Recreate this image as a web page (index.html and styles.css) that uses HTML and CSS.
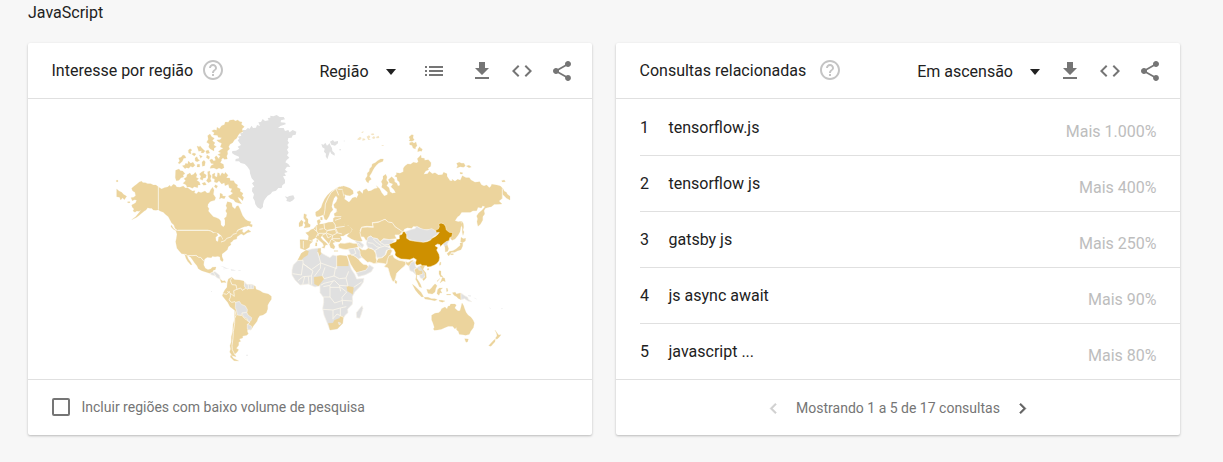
FILE: index.html
```html
<!DOCTYPE html>
<html lang="pt-BR">
<head>
<meta charset="utf-8">
<title>JavaScript</title>
<link rel="stylesheet" href="styles.css">
</head>
<body>
<svg class="sprite" aria-hidden="true">
  <symbol id="help" viewBox="0 0 24 24"><path d="M11 18h2v-2h-2v2zm1-16C6.48 2 2 6.48 2 12s4.480 10 10 10 10-4.480 10-10S17.520 2 12 2zm0 18c-4.410 0-8-3.590-8-8s3.590-8 8-8 8 3.590 8 8-3.590 8-8 8zm0-14c-2.210 0-4 1.790-4 4h2c0-1.100.9-2 2-2s2 .9 2 2c0 2-3 1.750-3 5h2c0-2.250 3-2.500 3-5 0-2.210-1.790-4-4-4z"/></symbol>
  <symbol id="list" viewBox="0 0 24 24"><path d="M3 13h2v-2H3v2zm0 4h2v-2H3v2zm0-8h2V7H3v2zm4 4h14v-2H7v2zm0 4h14v-2H7v2zM7 7v2h14V7H7z"/></symbol>
  <symbol id="download" viewBox="0 0 24 24"><path d="M19 9h-4V3H9v6H5l7 7 7-7zM5 18v2h14v-2H5z"/></symbol>
  <symbol id="code" viewBox="0 0 24 24"><path d="M9.400 16.600L4.800 12l4.600-4.600L8 6l-6 6 6 6 1.400-1.400zm5.200 0l4.600-4.600-4.600-4.600L16 6l6 6-6 6-1.400-1.400z"/></symbol>
  <symbol id="share" viewBox="0 0 24 24"><path d="M18 16.080c-.76 0-1.440.3-1.960.77L8.910 12.700c.05-.23.09-.46.09-.7s-.04-.47-.09-.7l7.050-4.110c.54.5 1.250.81 2.040.81 1.660 0 3-1.340 3-3s-1.340-3-3-3-3 1.340-3 3c0 .24.04.47.09.7L8.040 9.810C7.500 9.310 6.790 9 6 9c-1.660 0-3 1.340-3 3s1.340 3 3 3c.79 0 1.500-.31 2.040-.81l7.120 4.160c-.05.21-.08.43-.08.65 0 1.610 1.310 2.920 2.920 2.920s2.920-1.310 2.920-2.920-1.310-2.920-2.920-2.920z"/></symbol>
  <symbol id="left" viewBox="0 0 24 24"><path d="M15.410 7.410L14 6l-6 6 6 6 1.410-1.410L10.830 12z"/></symbol>
  <symbol id="right" viewBox="0 0 24 24"><path d="M10 6L8.590 7.410 13.170 12l-4.580 4.590L10 18l6-6z"/></symbol>
</svg>

<h1 class="term">JavaScript</h1>
<main class="cards">
  <section class="card">
    <header class="card-header">
      <h2 class="title">Interesse por região</h2>
      <svg class="icon help help-region"><use href="#help"/></svg>
      <div class="controls">
        <span class="select">Região<i class="arrow"></i></span>
        <svg class="icon list"><use href="#list"/></svg>
        <svg class="icon download"><use href="#download"/></svg>
        <svg class="icon"><use href="#code"/></svg>
        <svg class="icon"><use href="#share"/></svg>
      </div>
    </header>
    <svg class="map" viewBox="28 99 564 280">
      <!-- Alaska, Canada and the Arctic archipelago -->
      <g class="land" transform="translate(105 105) scale(.33333)">
        <path d="M80 250L88 243 95 238 103 231 110 229 114 233 121 233 128 236 137 236 145 240 153 240 160 246V314L153 316 145 315 140 310 135 310 128 308 123 315 118 318 108 326 100 333 95 337 80 344 92 335 98 328 103 322 108 315 102 319 95 318 90 322 84 318 87 312 82 307 80 300 86 297 92 293 95 285 88 284 82 287 78 278 86 277 92 272 90 262 83 258zM35 252L42 258 50 262 55 268 65 274 58 284 53 278 47 285 44 277 35 275zM34 226h5v4h-5zM68 290h7v3h-7z"/>
        <path d="M160 246L170 252 178 248 188 246 194 241 198 245 205 238 211 240 215 246 225 247 235 243 241 249 248 248 256 254 262 258 270 257 268 264 275 266 280 260 288 263 300 258 306 264 313 263 317 254 323 247 327 255 325 268 332 278 329 286 320 288 315 290 309 298 308 305 312 311 310 318 318 328 325 335 334 338 342 342 347 348 348 360 355 366 360 360 360 346 358 340 364 335 366 325 362 318 366 309 363 302 367 290 375 292 380 294 382 305 390 312 395 303 400 302 405 312 408 320 413 332 421 343 430 349 432 358 424 363 410 368 398 374 392 385 402 375 413 373 412 380 417 384 430 374 438 380 427 383 416 391 410 387 400 389 392 395 380 397 372 404 362 406 353 412 345 408 354 402 349 392 340 385 322 380 308 376H218L210 370 207 360 200 354 194 343 190 335 181 328 175 322 165 318 160 314z"/>
        <path class="edge" d="M160 246V314M218 376H308L322 380"/>
        <path d="M429 348L438 350 435 357 442 359 441 366 430 362 421 365 427 358zM199 360L205 370 215 378 205 373 198 365z"/>
        <path d="M350 62L358 59 361 51 370 52 374 46 385 44 392 48 398 45 405 50 411 51 409 58 418 65 411 72 414 80 405 84 400 90 395 100 388 105 383 113 375 118 371 125 374 132 367 138 368 147 365 153 367 162 358 163 354 158 346 167 342 159 346 153 338 149 348 144 340 140 347 134 355 130 346 126 350 115 341 111 335 105 345 104 350 98 340 97 337 91 325 90 328 83 320 78 327 74 335 76 336 67 343 71z"/>
        <path d="M308 92L315 87 320 95 328 100 322 107 330 113 326 120 334 125 327 130 327 138 316 132 311 126 313 117 305 112 310 103z"/>
        <path d="M276 123l7 3 2-4 6 8 9 8-5 6-7-1 2-6-9 2zM250 136l5-5 6 4-4 4 1 8-7-3zM221 159l7-2 6-7 6 2 3 7-7 1-4 9-8 7-5-2 5-6zM232 182l7-1 3-6 6 2 2-9 7 7 7-3 6 9-6 6-8-3-4 6-8-2-4 3zM260 147l7-3 6 3-5 6zM270 159l6-4 3 8 5 3-7 4-6-2zM291 171l6-5 4 5-2 11-7 2zM277 178h7v8h-8zM306 150l8 5-2 8-8-5zM302 138l8-3 4 9-9 2zM283 150l9 4-5 6z"/>
        <path d="M314 165l7-3 5 6 6-2-3-9 5-5 6 8 10 5-4 8 9 5 2 10-7 4-8-3-7 4-8-4-12 1 3-8 9-5-9-2z"/>
        <path d="M212 196L222 192 226 197 233 198 240 206 234 210 236 216 228 218 222 226 214 227 211 218z"/>
        <path d="M234 235L242 227 237 221 245 216 246 209 255 204 259 211 266 208 271 202 276 210 273 217 281 221 275 226 283 231 286 240 279 240 278 248 268 245 262 250 254 246 246 246 243 239z"/>
        <path d="M283 207L291 200 298 198 296 205 304 210 302 218 294 220 293 226 285 222 288 214zM308 200L315 198 314 207 319 213 316 221 319 229 310 233 304 227 309 219zM291 235L300 232 304 239 296 241z"/>
        <path d="M322 208L330 204 329 213 336 217 338 203 343 205 345 214 351 203 358 208 361 202 369 211 364 219 374 219 376 227 386 227 390 235 398 240 396 247 406 252 405 259 414 265 411 272 416 277 413 287 405 279 398 276 402 285 410 296 400 294 391 291 386 284 375 280 370 273 377 270 384 264 377 260 381 251 373 249 370 238 360 242 358 233 350 237 342 227 336 233 328 231 329 222 322 220z"/>
        <path d="M345 265l7 2 1 6 9 1-4 7-9-2-6 3 2-8zM331 239l7 4-4 7-6-5z"/>
      </g>
      <!-- Greenland, Iceland, Svalbard -->
      <g class="nodata" transform="translate(225 105) scale(.33333)">
        <path d="M45 85L53 84 54 75 62 75 69 68 73 72 80 62 84 69 93 68 96 60 105 63 100 52 108 51 113 42 120 48 131 46 128 39 136 38 136 32 145 34 155 30 164 36 176 36 180 43 168 46 167 52 181 53 182 58 166 63 159 69 176 69 180 78 190 75 194 82 203 75 214 80 212 89 203 91 200 98 190 99 188 107 192 113 187 120 191 127 186 134 191 143 186 151 193 158 185 165 181 172 190 177 196 186 186 185 180 194 188 201 178 204 183 212 174 214 180 225 180 235 172 241 170 249 160 249 153 257 142 260 137 267 128 272 122 280 117 287 114 299 114 306 107 313 97 307 91 298 89 287 84 279 87 268 81 259 82 248 88 245 81 235 88 229 80 220 75 205 74 195 66 184 59 177 47 174 42 169 31 169 32 162 42 160 42 155 28 149 21 144 22 138 33 137 43 131 38 125 48 120 38 106 43 101 39 95 49 92z"/>
        <path d="M179 274L187 276 193 273 205 271 209 280 204 286 195 291 184 288 186 282z"/>
        <path d="M289 117L296 119 301 113 306 122 314 115 317 123 321 129 322 138 329 145 329 152 319 146 315 139 311 151 307 163 302 154 303 146 297 140 299 131 292 127zM315 110L324 105 328 110 339 108 339 115 330 122 319 119zM343 133h5v3h-5zM356 107h4v2h-4z"/>
      </g>
      <!-- Russia -->
      <g class="land" transform="translate(345 120) scale(.33333)">
        <path d="M-5 198L5 201 15 205 24 212 25 221 15 227 5 226-2 223 0 230-2 237 12 247 18 240 22 234 31 231 34 235 40 224 36 216 44 212 53 221 55 211 64 206 70 214 78 212 88 206 98 204 94 197 104 206 110 218 118 228 127 224 128 217 118 208 110 202 112 192 109 185 114 176 114 169 122 163 126 171 124 180 130 188 125 197 132 203 135 215 142 220 152 218 147 209 138 200 144 192 134 188 130 179 140 170 148 178 149 186 155 189 159 198 165 196 163 186 157 181 156 172 149 169 155 163 154 158 165 160 175 155 175 145 180 138 188 132 197 133 205 127 215 129 220 125 217 116 228 105 229 114 238 115 239 121 250 119 258 128 257 139 249 145 251 149 242 153 236 163 248 161 253 154 262 161 270 158 280 165 292 164 296 157 306 161 306 169 315 182 322 183 321 178 330 184 338 178 346 181 352 167 363 173 373 173 378 180 390 187 404 185 409 194 417 198 425 195 433 203 438 199 440 193 455 195 466 198 474 206 478 214 484 217 487 223 495 229V240L485 235 472 222 472 235 462 243 471 252 457 253 448 253 439 260 431 262 421 265 417 272 419 282 413 290 413 301 406 313 399 319 396 305 398 296 395 288 401 279 411 271 420 260 413 257 409 264 399 262 395 272 384 272 376 277 350 277 344 286 337 291 330 302 340 305 347 304 349 314 347 325 345 335 339 346 330 357 321 361 314 352 322 342 305 335 297 312 288 309 282 312 285 328 275 331 270 335 260 331 250 328 233 329 220 320 205 319 200 325 187 323 178 327 174 335 165 331 150 321 140 308 130 307 120 298 110 303 100 306 82 308 85 320 65 319 50 322 45 332 50 342 47 352 52 363 40 365 20 357 6 348 16 337 21 329 12 318 0 317-8 305-18 295-16 280-26 275-26 262-18 256-10 248-8 235-5 225-8 210-12 200z"/>
        <path class="edge" d="M-8 200L-8 210-5 225-8 235-10 248-18 256-26 262-26 275-16 280-18 295-8 305 0 317 12 318 21 329 16 337M45 332L50 322 65 319 85 320 82 308 100 306 110 303 120 298 130 307 140 308 150 321 165 331"/>
        <path d="M65 185L61 177 67 168 67 159 73 154 74 146 80 140 82 132 91 128 98 122 107 117 115 117 114 124 101 129 94 136 88 143 84 150 79 160 73 169 79 178 72 182 70 189zM192 51l8-7 5 1-1 9 4 6-8 4-8-2 3-4zM194 68l8-2 5 4 6-4 3 12-4 3-1 6-7-3-3-8-7-2zM218 95l1-8 5-7 3 5 5 2-2 7-5-1zM335 130l8-3 6 3 8 0 4 8-6 4-9-2-11 4 3-7zM364 138l8-2 7 5-7 2zM345 157l8 1-1 4-6 0zM470 182l8-2 3 5-9 1zM350 303l5 8 1 11-2 8 3 6-3 10-2-9 0-14-4-8z"/>
        <path class="faint" d="M38 56l7-6 5 4-5 6-8-1zM48 37l8-3-2 5zM53 55l7 1 1 4-9 2zM65 50l7-4 4 4-4 6 6 3-8 1zM80 54l7-6 4 5-4 4zM93 51l8-4 2 7-8 1zM77 42l8-2 3 4-7 2zM110 76h6v2h-6z"/>
        <path class="edge" d="M472 205V236"/>
      </g>
      <!-- United States, Mexico and South America -->
      <g class="land" transform="translate(160 225) scale(.33333)">
        <path d="M48 17H145L153 18 160 23 170 24 174 31 167 37 168 47 174 50 176 36 183 34 187 42 183 51 195 47 200 40 213 36 219 28 230 25 234 22 240 29 231 35 230 42 221 44 216 50 211 53 213 59 205 65 202 74 194 81 186 87 186 95 190 105 187 110 181 105 180 96 174 94 165 95 157 94 154 98 142 97 134 102 132 109 126 102 122 97 116 97 108 91 96 92 82 91 74 87 65 86 57 77 51 70 49 60 47 50 49 41 51 28z"/>
        <path d="M74 87L82 91 96 92 108 91 116 97 122 97 126 102 132 109 131 120 136 130 144 134 152 132 157 127 168 126 166 134 160 136 157 142 149 145 137 141 125 137 115 131 111 122 104 114 98 105 92 97 86 93 81 92 85 102 91 110 96 119 92 119 83 109 78 100z"/>
        <path class="edge" d="M53 16H145L153 18 160 23M183 51L195 47 200 40 213 36 219 28 230 25M74 87L82 91 96 92 108 91 116 97 122 97 126 102 132 109"/>
        <path d="M205 162L215 157 224 164 238 165 251 168 254 173 263 180 276 179 286 184 288 193 300 197 309 203 325 207 334 214 334 223 327 233 323 241 323 252 319 263 309 270 299 272 294 280 291 289 280 303 276 310 272 315 262 313 262 320 265 326 260 331 248 333 248 339 238 342 242 349 236 352 236 361 229 370 236 374 231 382 224 388 228 395 217 392 209 381 212 372 210 362 214 350 214 335 218 320 219 300 224 281 224 256 210 245 203 232 194 221 187 212 190 203 195 194 201 187 202 173zM213 389L220 400 229 404 236 408 222 407 211 396z"/>
        <path d="M180 162l8 6 7-1 3 6-6-1-8 1z"/>
        <path class="edge" d="M215 159l-4 8 5 12 12 1 3 13-10 4 2 17-12-9-9-6M231 193l11-4 5 7 10-6-4-9 4-10M190 206l10 2 10-9M211 205l0 12-4 8 8 7 10-2 3 5M225 257l3 14-4 10 0 14-4 25-1 20-3 22 1 12 8 16M232 268l14 3 8 10 16 10-8 9"/>
        <path class="nodata" d="M227 232L238 229 244 238 256 243 262 254 261 262 246 264 243 271 232 270 229 255 226 248zM246 264L260 262 264 270 275 278 273 287 265 291 262 281 250 275zM262 297L275 304 273 315 262 312zM253 172L261 179 270 178 282 181 281 191 265 191 261 193 254 184zM151 145L165 140 178 150 181 163 171 158 165 152 153 149z"/>
        <path class="edge" d="M265 179v13M273 179v12M160 142l8 12"/>
        <path class="faint nodata" d="M180 122l12 3 9 5 8 2-12-1-10-6zM212 132l10 2 6 3-14 0zM235 136h7v2h-7zM190 131h4v2h-4zM258 389h6v3h-6zM153 198h3v2h-3z"/>
      </g>
      <!-- Africa, Europe, Middle East and Central Asia -->
      <g class="land" transform="translate(280 200) scale(.33333)">
        <path class="nodata" d="M65 160L80 151 95 147 112 145 122 145 121 157 135 165 150 173 158 165 170 168 200 168 204 182 208 190 214 208 224 223 230 237 252 235 250 246 242 258 225 275 217 290 218 303 217 313 203 327 204 338 196 345 190 355 188 370 172 387 150 390 142 370 132 345 128 325 131 308 131 293 120 278 120 257 105 261 85 252 60 255 45 240 36 225 36 210 40 195 55 180z"/>
        <path class="nodata" d="M246 317L249 325 243 345 239 355 230 353 229 338z"/>
        <path d="M64 160L78 151 86 154 83 165 70 173 64 181 53 181zM114 146L122 145 122 155 124 161 118 167 113 155zM170 168L180 166 200 168 205 183 205 198H170zM102 232L128 228 132 236 124 247 115 258 103 252zM200 258L221 262 218 283 202 273zM145 370L159 369 163 361 178 355 183 348 190 349 188 370 172 386 150 390z"/>
        <path class="edge" d="M53 181h16v10l25 18 28-20-9-33M122 189l48 17v-38M122 189l-1 16-18 24M69 191l-5 34-26-4M69 191l30 22-5 15-25 2-15 12M170 198l-4 8-4 22-30 8-5-10 8-24M162 228l16 8 20-2 8-20M198 234l6 24-26-2-14-14-32 8-10 6M221 262l24-16M160 242l-10 14-20 4M150 257l0 34-20 0M150 262l32 0 18 14-14 16 2 22M150 291l14 18 24-8 28 2M129 328l30 2 0 28M159 330l22-6 18-4M159 356l12-14 20 10M181 324l0 24M85 230l2 22M74 230l-6 24M95 228l0 26M178 256l4 18"/>
        <path class="nodata" d="M175 367l8 3-5 5z"/>
        <!-- Europe -->
        <path d="M57 69L64 60 70 65 67 78 57 80zM72 41L80 44 78 52 84 58 84 69 91 74 90 81 72 84 76 75 72 68 77 63 71 54z"/>
        <path d="M60 119L72 119 84 121 86 108 77 98 86 95 92 89 101 86 108 77 114 74 111 62 118 58 122 65 117 73 132 71 146 67 160 66 160 55 165 51 162 41 171 35 182 36 186 45 183 53 190 60 193 73 210 79 216 90 210 98 198 103 190 108 181 108 185 118 178 126 168 125 158 129 165 140 162 147 152 143 148 132 139 122 126 107 122 112 128 120 139 129 143 135 137 134 133 145 125 142 132 139 128 130 114 118 107 113 97 119 98 125 90 132 88 142 75 150 61 145z"/>
        <path d="M107 45L107 36 116 31 124 22 127 12 134-3 142-14 153-25 166-33 178-40 188-39 192-33 187-28 190-10 191 8 184 20 173 27 164 24 161 14 169 5 173-6 168-13 162-5 158 7 155 20 159 29 151 38 147 49 140 60 134 58 130 44 119 49 110 50z"/>
        <path class="edge" d="M132 46l3-17 1-17 8-18 9-16 15-12 8 20M168-36l8 4 12 0M108 78l2 16-9-7M110 94l4 6-6 12M132 71l2 16 8 5-4 8-22 0M160 66l6 9 0 12-24 4M142 92l24-4 4 12-12 6-18-6M158 106l-2 12 12 8M170 98l16 4M165 61l18-6M162 50h22M166 83l28-4M88 121l10 3M70 123l0 22M126 106l12-6 6 14 10-6M148 132l4-12 6-4 22 0M168 86l5 13M118 88l12-2M116 100l-2 8"/>
        <path d="M107 128h4v10h-5zM110 119h3v6h-3zM121 52h6v8h-5zM162 152h12v2h-12z"/>
        <!-- Middle East -->
        <path class="bordered" d="M174 134L181 129 194 130 209 127 220 130 231 130 235 141 225 145 208 147 198 149 186 147 177 144zM201 165L213 162 225 169 236 178 242 186 250 193 260 194 267 202 258 211 240 216 230 219 221 208 211 192zM236 141L247 149 257 149 265 143 281 149 288 161 288 174 294 189 282 191 270 186 262 187 252 178 243 170 239 160z"/>
        <path class="bordered" d="M288 188L294 175 306 173 317 164 322 150 330 146 337 152 332 162 334 170 322 181 320 193 307 190zM240 98L245 82 262 81 280 82 277 69 295 67 305 62 315 58 325 66 337 68 345 80 368 95 358 105 345 105 350 116 328 119 311 116 300 126 292 116 279 114 273 108 264 112 268 124 257 121 251 111 243 111z"/>
        <path class="nodata" d="M205 148L230 143 240 154 240 166 246 172 236 177 226 169 212 163zM224 122L240 125 252 135 247 144 235 139 232 130zM229 218L257 211 263 203 268 194 281 203 274 215 257 224 235 230zM263 113L273 108 279 114 292 116 300 126 311 118 328 119 344 121 331 134 325 142 335 145 319 151 315 165 304 173 291 173 286 153 274 144 264 143 259 132z"/>
        <path class="edge" d="M264 128l14 2 12 10 10 3M285 151l15-9 14-4 16 4M280 117l12 12 12 8M300 127l14 8 18-2M222 145l6 15-14 6M234 129l10 12"/>
      </g>
      <!-- East and South Asia, Oceania -->
      <g class="land" transform="translate(380 210) scale(.33333)">
        <path class="bordered" d="M12 170L21 160 22 149 27 137 38 134 43 144 57 151 76 154 84 157 96 150 101 151 94 165 87 169 77 163 74 168 62 178 50 190 47 203 43 215 37 213 30 196 24 174z"/>
        <path d="M46 210l5 5-2 6-4-3z"/>
        <path class="nodata" d="M94 157L104 154 106 168 110 174 102 178 108 195 98 185 90 182 87 170zM112 171L119 168 125 173 131 183 135 195 130 207 121 204 118 195 128 192 120 180 113 180z"/>
        <path d="M104 179L112 174 116 181 126 183 127 191 116 195 111 194 110 205 116 214 121 222 125 233 118 230 112 217 107 208 109 196zM124 166L134 169 129 178 138 189 139 203 131 212 128 208 135 201 134 190 126 178 120 169z"/>
        <path class="edge" d="M76 154l2 10M50 145l24 9 8-2"/>
        <path class="nodata" d="M75 65L84 62 95 58 105 56 110 49 118 54 130 58 142 60 155 56 166 62 176 66 171 74 160 80 150 90 130 97 100 93 82 86 80 75z"/>
        <path class="nodata" d="M188 99L198 93 208 90 202 101 202 107 194 110z"/>
        <path d="M195 109L202 106 206 116 203 124 196 126zM243 82L250 86 257 85 256 93 248 98 242 96zM248 99L248 108 243 119 233 122 224 127 214 127 210 133 206 138 201 131 209 124 219 122 228 117 234 112 241 106 240 99zM212 131h8v3h-8z"/>
        <path class="top" d="M28 103L39 98 48 95 50 88 58 87 58 76 66 73 69 65 74 65 80 74 80 85 89 91 100 93 130 97 141 95 151 91 156 85 165 80 172 75 178 67 169 68 167 60 175 57 178 50 176 42 183 39 192 42 197 50 199 60 208 67 218 68 215 81 210 82 207 92 200 94 188 103 181 110 180 104 173 102 165 107 174 113 170 120 177 133 179 143 177 153 170 161 162 166 151 170 142 171 140 167 127 167 122 163 110 166 106 159 109 149 101 144 89 149 79 148 63 147 51 141 45 135 46 127 41 117 32 113z"/>
        <path d="M141 177l5-2 1 4-4 2zM179 158l4-2-1 9-4 1zM177 182l6 1 0 12 6 5-7 1-5-9zM187 202l7 3 2 10-7-3-9 7 4-8zM180 205l-8 10 0-3z"/>
        <path d="M97 223L104 228 114 238 123 247 131 260 125 261 115 251 106 240zM132 262L144 262 155 266 165 266 172 269 164 272 150 269 135 267zM140 238L149 239 155 233 162 224 166 222 171 227 167 236 165 246 157 252 144 250zM173 239L178 234 188 234 181 240 186 249 180 248 177 256 171 251zM177 271h8l10 2-8 4-9-3zM199 235h3l2 8-4 2zM200 253h12v2h-12z"/>
        <path d="M217 248L226 247 229 252 242 249 243 269 234 265 230 260 222 256z"/>
        <path class="nodata" d="M243 249L254 257 263 262 265 268 275 275 264 273 254 266 243 269z"/>
        <path class="faint nodata" d="M264 258l8 2 1-4-9 0zM280 262l8 4 4 2-6-1zM328 291l5 6-3-1zM362 295l7 0-3 3z"/>
        <path d="M155 316L165 310 176 308 182 303 185 296 195 291 201 297 204 289 209 288 212 282 224 282 229 285 224 294 234 303 240 302 243 292 246 279 251 287 254 297 258 307 264 315 273 322 279 330 283 339 280 353 272 364 268 373 257 376 249 374 238 373 235 364 230 360 229 352 225 357 218 349 205 349 194 353 184 358 172 360 163 361 160 357 163 352 159 339 155 330zM254 386L265 387 263 395 258 397zM345 360L352 370 356 375 363 374 358 381 351 388 346 385 351 378 350 371zM346 387L345 395 338 403 333 409 326 407 334 398 341 391z"/>
      </g>
    </svg>
    <footer class="card-footer option">
      <span class="checkbox"></span>
      <span>Incluir regiões com baixo volume de pesquisa</span>
    </footer>
  </section>

  <section class="card">
    <header class="card-header">
      <h2 class="title">Consultas relacionadas</h2>
      <svg class="icon help help-queries"><use href="#help"/></svg>
      <div class="controls">
        <span class="select select-rising">Em ascensão<i class="arrow"></i></span>
        <svg class="icon download"><use href="#download"/></svg>
        <svg class="icon"><use href="#code"/></svg>
        <svg class="icon"><use href="#share"/></svg>
      </div>
    </header>
    <ol class="queries">
      <li class="query"><span class="rank">1</span><span>tensorflow.js</span><span class="value">Mais 1.000%</span></li>
      <li class="query"><span class="rank">2</span><span>tensorflow js</span><span class="value">Mais 400%</span></li>
      <li class="query"><span class="rank">3</span><span>gatsby js</span><span class="value">Mais 250%</span></li>
      <li class="query"><span class="rank">4</span><span>js async await</span><span class="value">Mais 90%</span></li>
      <li class="query"><span class="rank">5</span><span>javascript ...</span><span class="value">Mais 80%</span></li>
    </ol>
    <footer class="card-footer pager">
      <svg class="chevron disabled"><use href="#left"/></svg>
      <span class="range">Mostrando 1 a 5 de 17 consultas</span>
      <svg class="chevron"><use href="#right"/></svg>
    </footer>
  </section>
</main>
</body>
</html>
```

FILE: styles.css
```css
* { box-sizing: border-box; }

body {
  margin: 0;
  height: 462px;
  overflow: hidden;
  background: #f7f7f7;
  color: #212121;
  font: 16px/24px Roboto, "Liberation Sans", sans-serif;
}

.sprite { display: none; }

.term {
  margin: 0;
  padding: 1px 0 0 28px;
  height: 43px;
  font-size: 16px;
  font-weight: 400;
}

.cards {
  display: flex;
  gap: 24px;
  padding-left: 28px;
}

.card {
  width: 564px;
  height: 392px;
  background: #fff;
  border-radius: 2px;
  box-shadow: 0 1px 3px rgba(0, 0, 0, .14), 0 1px 2px rgba(0, 0, 0, .12);
}

.card-header {
  display: flex;
  align-items: center;
  height: 56px;
  padding: 0 18.500px 0 23.500px;
  border-bottom: 1px solid #e0e0e0;
}

.title {
  margin: 0;
  font-size: 16px;
  font-weight: 400;
}

.icon {
  width: 24px;
  height: 24px;
  fill: #757575;
}

.help { fill: #c4c4c4; margin-bottom: 1px; }
.help-region { margin-left: 7.500px; }
.help-queries { margin-left: 11.500px; }

.controls {
  display: flex;
  align-items: center;
  gap: 16px;
  margin-left: auto;
  padding-top: 1px;
}

.select {
  display: flex;
  align-items: center;
  gap: 17px;
  margin-right: 10px;
  padding-top: 1px;
}
.select-rising { margin-right: 1.500px; }

.arrow {
  border: solid transparent;
  border-width: 6px 5.500px 0;
  border-top-color: #212121;
}

.list { margin-right: 8px; }

.map {
  display: block;
  width: 564px;
  height: 280px;
}
.land { fill: #ecd49d; stroke: #ecd49d; stroke-width: .6; stroke-linejoin: round; }
.nodata { fill: #e0e0e0; }
.land .nodata { stroke-width: 2; stroke: #f6f2e8; }
.land .bordered { stroke-width: 2; stroke: #fdf9f0; }
.land .faint { opacity: .6; stroke: none; }
.land .top { fill: #ce9000; stroke: #fbf3df; stroke-width: 1.500; }
.land .edge { fill: none; stroke: #fbf6ea; stroke-width: 2.500; }

.card-footer {
  display: flex;
  align-items: center;
  height: 56px;
  border-top: 1px solid #e0e0e0;
  color: #757575;
  font-size: 14px;
}

.option { padding: 0 0 2px 24px; gap: 11.500px; }

.checkbox {
  width: 18px;
  height: 18px;
  border: 2px solid #757575;
  border-radius: 2px;
}

.queries {
  height: 280px;
  margin: 0;
  padding: 1px 0 0 24px;
  list-style: none;
}

.query {
  display: flex;
  align-items: center;
  height: 56px;
  padding-right: 23.500px;
  border-bottom: 1px solid #e0e0e0;
}
.query:last-child { height: 55px; border-bottom: 0; }

.rank { width: 28.500px; }

.value {
  margin-left: auto;
  padding-top: 8px;
  color: #bdbdbd;
}

.pager { justify-content: center; gap: 12px; padding: 2px 0 0; }
.range { padding-bottom: 2px; }

.chevron {
  width: 21px;
  height: 21px;
  fill: #616161;
  stroke: #616161;
  stroke-width: .5;
}
.disabled { fill: #d0d0d0; stroke: #d0d0d0; }
```
